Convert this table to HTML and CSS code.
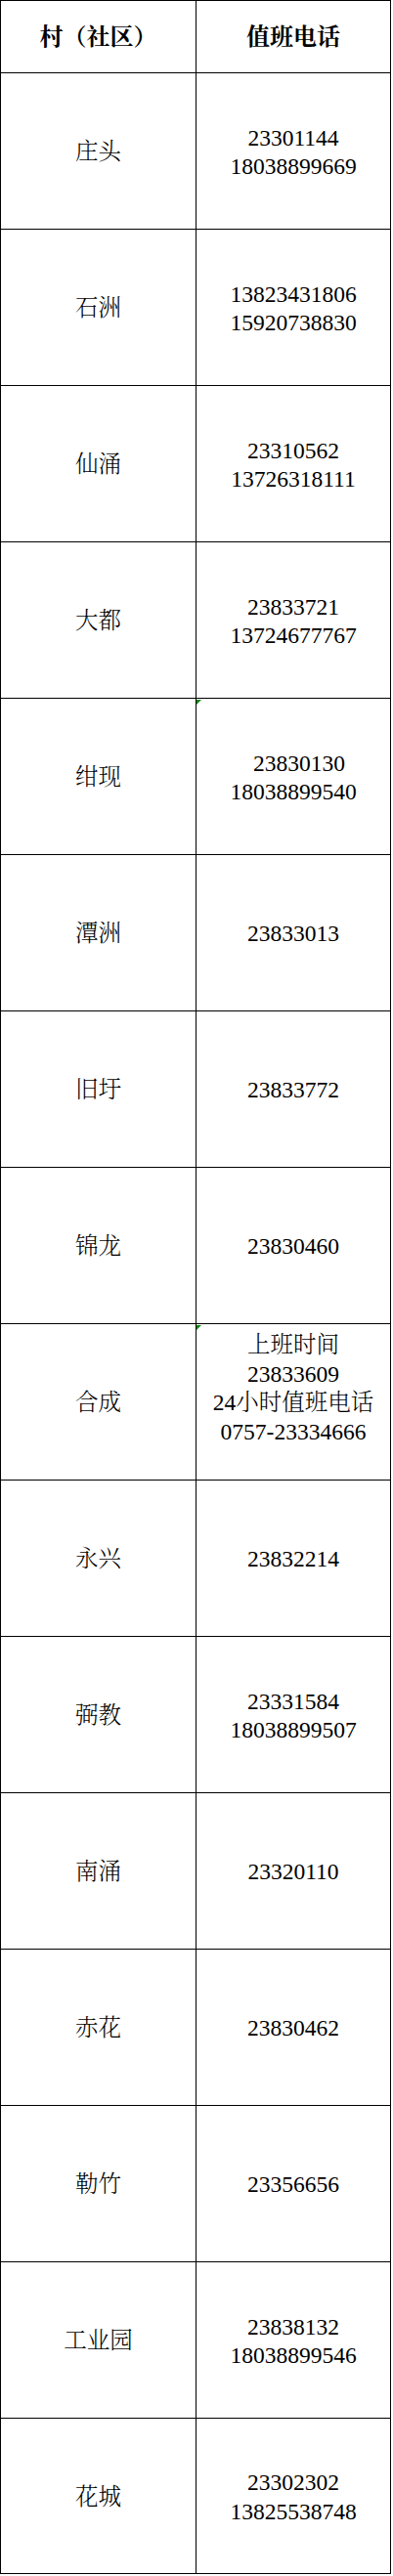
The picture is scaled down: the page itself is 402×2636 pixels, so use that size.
FILE: index.html
```html
<!DOCTYPE html>
<html lang="zh-CN">
<head>
<meta charset="utf-8">
<title>值班电话</title>
<link rel="stylesheet" href="styles.css">
</head>
<body>
<div class="sheet">
  <div class="cell head">村（社区）</div>
  <div class="cell head">值班电话</div>

  <div class="cell">庄头</div>
  <div class="cell"><div>23301144</div><div>18038899669</div></div>

  <div class="cell">石洲</div>
  <div class="cell"><div>13823431806</div><div>15920738830</div></div>

  <div class="cell">仙涌</div>
  <div class="cell"><div>23310562</div><div>13726318111</div></div>

  <div class="cell">大都</div>
  <div class="cell"><div>23833721</div><div>13724677767</div></div>

  <div class="cell">绀现</div>
  <div class="cell flagged"><span class="flag"></span><div><span class="lead"></span>23830130</div><div>18038899540</div></div>

  <div class="cell">潭洲</div>
  <div class="cell"><div>23833013</div></div>

  <div class="cell">旧圩</div>
  <div class="cell"><div>23833772</div></div>

  <div class="cell">锦龙</div>
  <div class="cell"><div>23830460</div></div>

  <div class="cell">合成</div>
  <div class="cell flagged tall"><span class="flag"></span><div>上班时间</div><div>23833609</div><div>24小时值班电话</div><div>0757-23334666</div></div>

  <div class="cell">永兴</div>
  <div class="cell"><div>23832214</div></div>

  <div class="cell">弼教</div>
  <div class="cell"><div>23331584</div><div>18038899507</div></div>

  <div class="cell">南涌</div>
  <div class="cell"><div>23320110</div></div>

  <div class="cell">赤花</div>
  <div class="cell"><div>23830462</div></div>

  <div class="cell">勒竹</div>
  <div class="cell"><div>23356656</div></div>

  <div class="cell">工业园</div>
  <div class="cell"><div>23838132</div><div>18038899546</div></div>

  <div class="cell">花城</div>
  <div class="cell"><div>23302302</div><div>13825538748</div></div>
</div>
</body>
</html>
```

FILE: styles.css
```css
html, body {
  margin: 0;
  padding: 0;
  background: #ffffff;
}

body {
  font-family: "Liberation Serif", "Noto Serif CJK SC", "Noto Sans CJK SC", serif;
  color: #000000;
}

.sheet {
  display: grid;
  grid-template-columns: 200px 199px;
  grid-template-rows: 74px repeat(15, 160px) 159px;
  width: 399px;
  border-top: 1px solid #000;
  border-left: 1px solid #000;
}

.cell {
  position: relative;
  box-sizing: border-box;
  border-right: 1px solid #000;
  border-bottom: 1px solid #000;
  display: flex;
  flex-direction: column;
  align-items: center;
  justify-content: center;
  text-align: center;
  font-size: 23.5px;
  font-weight: 300;
  line-height: 29.5px;
  white-space: nowrap;
  padding-top: 3px;
}

.head {
  font-size: 24px;
  font-weight: bold;
  padding-top: 2px;
}

.tall {
  padding-bottom: 29.5px;
}

.lead {
  display: inline-block;
  width: 0.5em;
}

.flag {
  position: absolute;
  left: 0;
  top: 1px;
  width: 0;
  height: 0;
  border-top: 5px solid #0a8a0a;
  border-right: 5px solid transparent;
}
```
